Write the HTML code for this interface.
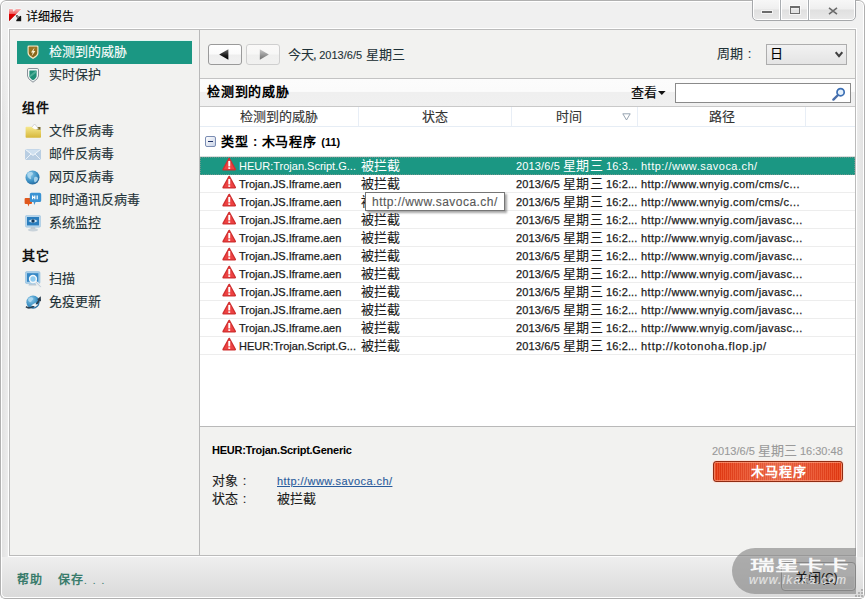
<!DOCTYPE html>
<html lang="zh-CN">
<head>
<meta charset="utf-8">
<title>详细报告</title>
<style>
*{box-sizing:border-box;margin:0;padding:0}
html,body{width:865px;height:599px;overflow:hidden;background:#fff}
body{font-family:"Liberation Sans",sans-serif;font-size:13px;color:#1c1c1c;position:relative;-webkit-text-stroke:.12px currentColor}
.abs,.abs>*{position:absolute}
#win{left:0;top:0;width:865px;height:599px;background:#f0f0f0;border-radius:6px 6px 5px 5px;overflow:hidden}
#wb1{left:0;top:0;width:865px;height:599px;border:1px solid #b0b0b0;border-radius:6px 6px 4px 4px}
#wb2{left:1px;top:1px;width:863px;height:597px;border:1px solid #fff;border-radius:5px}
#botbar{left:1px;top:556px;width:863px;height:41px;background:linear-gradient(#efefef,#dadada)}
#title{left:26px;top:9px;font-size:12px;line-height:16px;color:#000;white-space:nowrap}
#frame{left:8px;top:28px;width:849px;height:529px;border:1px solid #fff}
#frame2{left:9px;top:29px;width:847px;height:527px;border:1px solid #bbbbbb;background:#f2f2f0}
#vdiv{left:199px;top:30px;width:1px;height:525px;background:#b9b9b9}
.t{white-space:nowrap;line-height:16px}
/* sidebar */
#sel{left:17px;top:41px;width:175px;height:23px;background:#1b9783;box-shadow:0 -1px 0 #e3f6f2}
.si{left:49px;font-size:13px;color:#1f3238}
.sh{left:22px;font-size:13px;letter-spacing:.8px;font-weight:bold;color:#111}
/* toolbar */
.nb{top:44px;width:34px;height:21px;border:1px solid #9a9a9a;border-radius:3px;background:linear-gradient(#fff 0,#fbfbfb 48%,#eeeeee 52%,#f1f1f1 100%)}
.nb.dis{border-color:#cfcfcf;background:linear-gradient(#faf9f8 0,#f7f7f6 48%,#efefee 52%,#f1f1f0 100%)}
#hsep1{left:200px;top:78px;width:655px;height:1px;background:#c3c3c3}
#band{left:200px;top:79px;width:655px;height:27px;background:linear-gradient(#fcfcfc 0,#fbfbfb 46%,#efefef 50%,#f0f0f0 100%)}
#hsep2{left:200px;top:106px;width:655px;height:1px;background:#c9c9c9}
#list{left:200px;top:107px;width:655px;height:319px;background:#fff}
#hsep3{left:200px;top:426px;width:655px;height:1px;background:#b9b9b9}
#colhdr{left:200px;top:107px;width:655px;height:20px;border-bottom:1px solid #e6edf5;background:#fff}
.ch{top:2px;font-size:13px;color:#333;text-align:center}
#colhdr>*{position:absolute}
.cs{top:0;width:1px;height:19px;background:#e8eef6}
.row{left:200px;width:655px;height:18px;border-bottom:1px solid #ededed}
.row>*{position:absolute;top:1px;line-height:16px;white-space:nowrap}
.row .n{left:39px;font-size:11px;-webkit-text-stroke-width:.25px}
.row .s{left:161px;font-size:13px}
.row .d{left:316px;font-size:11px;letter-spacing:.15px;-webkit-text-stroke-width:.25px}
.row .d b{font-weight:normal;font-size:13px;-webkit-text-stroke-width:.12px}
.row .p{left:441px;font-size:11px;letter-spacing:.42px;-webkit-text-stroke-width:.25px}
.row.sel{background:#1b9783;color:#fff;-webkit-text-stroke-width:0;border-bottom:none;outline:1px dotted #6b978e;outline-offset:-1px}
.row svg{left:22px;top:0px}

#ctl{left:752px;top:-1px;width:104px;height:22px;border:1px solid #a6a8ab;border-radius:0 0 5px 5px;background:linear-gradient(#f7f7f7 0,#efefef 45%,#e0e0e0 50%,#e9e9e9 100%);box-shadow:inset 0 -1px 0 #fff,inset 1px 0 0 #fff,inset -1px 0 0 #fff}
#ctl>*{position:absolute}
#ctl .dv{top:0;width:1px;height:20px;background:#a9adb1;box-shadow:1px 0 0 #fff,-1px 0 0 #fff}
#tip{left:365px;top:192px;width:140px;height:19px;border:1px solid #767676;background:#fff;box-shadow:2px 2px 2px rgba(0,0,0,.35);font-size:12px;letter-spacing:.46px;line-height:18px;color:#575757;padding-left:6px;white-space:nowrap}
#badge{left:713px;top:461px;width:130px;height:21px;padding-left:2px;border:1px solid #8f2c13;border-radius:3px;background:linear-gradient(90deg,rgba(255,255,255,0),rgba(255,255,255,.22) 50%,rgba(255,255,255,0)),repeating-linear-gradient(90deg,#de350f 0,#de350f 1px,#ea4f27 1px,#ea4f27 2px);box-shadow:inset 0 0 0 1px rgba(255,175,145,.6),0 0 0 1px rgba(253,226,216,.9);color:#fff;font-size:13px;letter-spacing:1px;font-weight:bold;text-align:center;line-height:19px}
#closebtn{left:781px;top:562px;width:75px;height:29px;border:1px solid #8c8c8c;border-radius:4px;background:linear-gradient(#f4f4f4 0,#ececec 48%,#dedede 52%,#d4d4d4 100%);box-shadow:inset 0 0 0 1px rgba(255,255,255,.7)}
#wm{left:732px;top:548px;width:124px;height:46px;border-radius:23px 0 0 23px;background:rgba(130,130,130,.62)}
.c{display:inline-block;width:13px;text-align:center;letter-spacing:0}
.row.sel *{-webkit-text-stroke-width:0!important}
.sh,#badge,[style*="font-weight:bold"],[style*="font-weight:900"]{-webkit-text-stroke-width:0}
</style>
</head>
<body>
<div id="win" class="abs">
  <div id="botbar"></div>
  <div style="left:2px;top:30px;width:6px;height:527px;background:linear-gradient(#f0f0f0,rgba(240,240,240,0) 90px),linear-gradient(90deg,#e2e2e2,#ededed)"></div>
  <div style="left:857px;top:30px;width:6px;height:527px;background:linear-gradient(#f0f0f0,rgba(240,240,240,0) 90px),linear-gradient(90deg,#ebebeb,#e2e2e2)"></div>
  <div id="wb2"></div>
  <div id="wb1"></div>
  <div id="title" class="t">详细报告</div>
  <div id="frame"></div>
  <div id="frame2"></div>
  <div id="vdiv"></div>


  <!-- sidebar -->
  <div id="sel"></div>
  <div class="t si" style="top:44px;color:#fff">检测到的威胁</div>
  <div class="t si" style="top:67px">实时保护</div>
  <div class="t sh" style="top:100px">组件</div>
  <div class="t si" style="top:123px">文件反病毒</div>
  <div class="t si" style="top:146px">邮件反病毒</div>
  <div class="t si" style="top:169px">网页反病毒</div>
  <div class="t si" style="top:192px">即时通讯反病毒</div>
  <div class="t si" style="top:215px">系统监控</div>
  <div class="t sh" style="top:248px">其它</div>
  <div class="t si" style="top:271px">扫描</div>
  <div class="t si" style="top:294px">免疫更新</div>

  <!-- toolbar -->
  <div class="nb" style="left:208px"></div>
  <div class="nb dis" style="left:246px"></div>
  <div class="t" style="left:288px;top:47px;font-size:13px;color:#1f3238">今天<span style="margin-left:-1px;letter-spacing:-.5px">, </span><span style="font-size:11px">2013/6/5</span> 星期三</div>
  <div class="t" style="left:717px;top:46px;font-size:13px;color:#1f3238">周期<span class="c">:</span></div>
  <div id="selbox" style="left:766px;top:44px;width:81px;height:21px;border:1px solid #adadad;background:linear-gradient(#f2f2f2,#e4e4e4)"></div>
  <div class="t" style="left:770px;top:46px;font-size:13px;color:#000">日</div>

  <div id="hsep1"></div>
  <div id="band"></div>
  <div class="t" style="left:207px;top:84px;font-size:13px;letter-spacing:.8px;font-weight:bold;color:#000">检测到的威胁</div>
  <div class="t" style="left:631px;top:85px;font-size:13px;color:#000">查看</div>
  <div id="search" style="left:675px;top:83px;width:176px;height:20px;border:1px solid #8a8a8a;background:#fff"></div>
  <div id="hsep2"></div>

  <div id="list"></div>
  <div id="colhdr">
    <div class="t ch" style="left:0;width:158px">检测到的威胁</div>
    <div class="cs" style="left:158px"></div>
    <div class="t ch" style="left:158px;width:153px">状态</div>
    <div class="cs" style="left:311px"></div>
    <div class="t ch" style="left:312px;width:113px">时间</div>
    <div class="cs" style="left:437px"></div>
    <div class="t ch" style="left:437px;width:169px">路径</div>
    <div class="cs" style="left:605px"></div>
  </div>
  <div class="t" style="left:221px;top:134px;font-size:13px;letter-spacing:.8px;font-weight:bold;color:#000">类型<span class="c">:</span>木马程序 <span style="font-size:11px;letter-spacing:0">(11)</span></div>

  <div style="left:200px;top:156px;width:655px;height:1px;background:#d9dddc"></div>
  <div class="row sel" style="top:157px"><svg width="15" height="14" viewBox="0 0 15 14"><path d="M7.2 1.7 L13.1 12.5 H1.3 Z" fill="#ee4242" stroke="#cf3030" stroke-width="1.9" stroke-linejoin="round"/><path d="M7.2 2.2 L12.6 12.2 H1.8 Z" fill="#ee4242"/><rect x="6.3" y="4" width="1.9" height="5.4" fill="#fff"/><rect x="6.3" y="10.3" width="1.9" height="1.6" fill="#fff"/></svg><span class="n">HEUR:Trojan.Script.G...</span><span class="s">被拦截</span><span class="d">2013/6/5 <b>星期三</b> 16:3...</span><span class="p" style="letter-spacing:.49px">http://www.savoca.ch/</span></div>
  <div class="row" style="top:175px"><svg width="15" height="14" viewBox="0 0 15 14"><path d="M7.2 1.7 L13.1 12.5 H1.3 Z" fill="#ee4242" stroke="#cf3030" stroke-width="1.9" stroke-linejoin="round"/><path d="M7.2 2.2 L12.6 12.2 H1.8 Z" fill="#ee4242"/><rect x="6.3" y="4" width="1.9" height="5.4" fill="#fff"/><rect x="6.3" y="10.3" width="1.9" height="1.6" fill="#fff"/></svg><span class="n">Trojan.JS.Iframe.aen</span><span class="s">被拦截</span><span class="d">2013/6/5 <b>星期三</b> 16:2...</span><span class="p">http://www.wnyig.com/cms/c...</span></div>
  <div class="row" style="top:193px"><svg width="15" height="14" viewBox="0 0 15 14"><path d="M7.2 1.7 L13.1 12.5 H1.3 Z" fill="#ee4242" stroke="#cf3030" stroke-width="1.9" stroke-linejoin="round"/><path d="M7.2 2.2 L12.6 12.2 H1.8 Z" fill="#ee4242"/><rect x="6.3" y="4" width="1.9" height="5.4" fill="#fff"/><rect x="6.3" y="10.3" width="1.9" height="1.6" fill="#fff"/></svg><span class="n">Trojan.JS.Iframe.aen</span><span class="s">被拦截</span><span class="d">2013/6/5 <b>星期三</b> 16:2...</span><span class="p">http://www.wnyig.com/cms/c...</span></div>
  <div class="row" style="top:211px"><svg width="15" height="14" viewBox="0 0 15 14"><path d="M7.2 1.7 L13.1 12.5 H1.3 Z" fill="#ee4242" stroke="#cf3030" stroke-width="1.9" stroke-linejoin="round"/><path d="M7.2 2.2 L12.6 12.2 H1.8 Z" fill="#ee4242"/><rect x="6.3" y="4" width="1.9" height="5.4" fill="#fff"/><rect x="6.3" y="10.3" width="1.9" height="1.6" fill="#fff"/></svg><span class="n">Trojan.JS.Iframe.aen</span><span class="s">被拦截</span><span class="d">2013/6/5 <b>星期三</b> 16:2...</span><span class="p">http://www.wnyig.com/javasc...</span></div>
  <div class="row" style="top:229px"><svg width="15" height="14" viewBox="0 0 15 14"><path d="M7.2 1.7 L13.1 12.5 H1.3 Z" fill="#ee4242" stroke="#cf3030" stroke-width="1.9" stroke-linejoin="round"/><path d="M7.2 2.2 L12.6 12.2 H1.8 Z" fill="#ee4242"/><rect x="6.3" y="4" width="1.9" height="5.4" fill="#fff"/><rect x="6.3" y="10.3" width="1.9" height="1.6" fill="#fff"/></svg><span class="n">Trojan.JS.Iframe.aen</span><span class="s">被拦截</span><span class="d">2013/6/5 <b>星期三</b> 16:2...</span><span class="p">http://www.wnyig.com/javasc...</span></div>
  <div class="row" style="top:247px"><svg width="15" height="14" viewBox="0 0 15 14"><path d="M7.2 1.7 L13.1 12.5 H1.3 Z" fill="#ee4242" stroke="#cf3030" stroke-width="1.9" stroke-linejoin="round"/><path d="M7.2 2.2 L12.6 12.2 H1.8 Z" fill="#ee4242"/><rect x="6.3" y="4" width="1.9" height="5.4" fill="#fff"/><rect x="6.3" y="10.3" width="1.9" height="1.6" fill="#fff"/></svg><span class="n">Trojan.JS.Iframe.aen</span><span class="s">被拦截</span><span class="d">2013/6/5 <b>星期三</b> 16:2...</span><span class="p">http://www.wnyig.com/javasc...</span></div>
  <div class="row" style="top:265px"><svg width="15" height="14" viewBox="0 0 15 14"><path d="M7.2 1.7 L13.1 12.5 H1.3 Z" fill="#ee4242" stroke="#cf3030" stroke-width="1.9" stroke-linejoin="round"/><path d="M7.2 2.2 L12.6 12.2 H1.8 Z" fill="#ee4242"/><rect x="6.3" y="4" width="1.9" height="5.4" fill="#fff"/><rect x="6.3" y="10.3" width="1.9" height="1.6" fill="#fff"/></svg><span class="n">Trojan.JS.Iframe.aen</span><span class="s">被拦截</span><span class="d">2013/6/5 <b>星期三</b> 16:2...</span><span class="p">http://www.wnyig.com/javasc...</span></div>
  <div class="row" style="top:283px"><svg width="15" height="14" viewBox="0 0 15 14"><path d="M7.2 1.7 L13.1 12.5 H1.3 Z" fill="#ee4242" stroke="#cf3030" stroke-width="1.9" stroke-linejoin="round"/><path d="M7.2 2.2 L12.6 12.2 H1.8 Z" fill="#ee4242"/><rect x="6.3" y="4" width="1.9" height="5.4" fill="#fff"/><rect x="6.3" y="10.3" width="1.9" height="1.6" fill="#fff"/></svg><span class="n">Trojan.JS.Iframe.aen</span><span class="s">被拦截</span><span class="d">2013/6/5 <b>星期三</b> 16:2...</span><span class="p">http://www.wnyig.com/javasc...</span></div>
  <div class="row" style="top:301px"><svg width="15" height="14" viewBox="0 0 15 14"><path d="M7.2 1.7 L13.1 12.5 H1.3 Z" fill="#ee4242" stroke="#cf3030" stroke-width="1.9" stroke-linejoin="round"/><path d="M7.2 2.2 L12.6 12.2 H1.8 Z" fill="#ee4242"/><rect x="6.3" y="4" width="1.9" height="5.4" fill="#fff"/><rect x="6.3" y="10.3" width="1.9" height="1.6" fill="#fff"/></svg><span class="n">Trojan.JS.Iframe.aen</span><span class="s">被拦截</span><span class="d">2013/6/5 <b>星期三</b> 16:2...</span><span class="p">http://www.wnyig.com/javasc...</span></div>
  <div class="row" style="top:319px"><svg width="15" height="14" viewBox="0 0 15 14"><path d="M7.2 1.7 L13.1 12.5 H1.3 Z" fill="#ee4242" stroke="#cf3030" stroke-width="1.9" stroke-linejoin="round"/><path d="M7.2 2.2 L12.6 12.2 H1.8 Z" fill="#ee4242"/><rect x="6.3" y="4" width="1.9" height="5.4" fill="#fff"/><rect x="6.3" y="10.3" width="1.9" height="1.6" fill="#fff"/></svg><span class="n">Trojan.JS.Iframe.aen</span><span class="s">被拦截</span><span class="d">2013/6/5 <b>星期三</b> 16:2...</span><span class="p">http://www.wnyig.com/javasc...</span></div>
  <div class="row" style="top:337px"><svg width="15" height="14" viewBox="0 0 15 14"><path d="M7.2 1.7 L13.1 12.5 H1.3 Z" fill="#ee4242" stroke="#cf3030" stroke-width="1.9" stroke-linejoin="round"/><path d="M7.2 2.2 L12.6 12.2 H1.8 Z" fill="#ee4242"/><rect x="6.3" y="4" width="1.9" height="5.4" fill="#fff"/><rect x="6.3" y="10.3" width="1.9" height="1.6" fill="#fff"/></svg><span class="n">HEUR:Trojan.Script.G...</span><span class="s">被拦截</span><span class="d">2013/6/5 <b>星期三</b> 16:2...</span><span class="p" style="letter-spacing:.73px">http://kotonoha.flop.jp/</span></div>

  <div id="hsep3"></div>
  <!-- detail -->
  <div class="t" style="left:212px;top:442px;font-size:11px;letter-spacing:-.25px;font-weight:bold;color:#000">HEUR:Trojan.Script.Generic</div>
  <div class="t" style="left:212px;top:473px;font-size:13px">对象<span class="c">:</span></div>
  <div class="t" style="left:277px;top:473px;font-size:11px;letter-spacing:.43px;color:#2a5c9c;text-decoration:underline">http://www.savoca.ch/</div>
  <div class="t" style="left:212px;top:491px;font-size:13px">状态<span class="c">:</span></div>
  <div class="t" style="left:277px;top:491px;font-size:13px">被拦截</div>


  <!-- title icon -->
  <svg style="left:8px;top:8px" width="15" height="15" viewBox="0 0 15 15">
    <defs><linearGradient id="kg" x1="0" y1="0" x2="0" y2="1"><stop offset="0" stop-color="#f7b3b3"/><stop offset=".38" stop-color="#f06060"/><stop offset=".42" stop-color="#e40000"/><stop offset="1" stop-color="#b40000"/></linearGradient></defs>
    <path d="M1 1 H4.6 L5.4 3.8 L8 1 H13.2 L1 13.2 Z" fill="url(#kg)" stroke="#fff" stroke-width="1" stroke-opacity=".7"/>
    <path d="M1 1 H4.6 L5.4 3.8 L8 1 H13.2 L1 13.2 Z" fill="url(#kg)"/>
    <path d="M7.6 7.4 L9.2 7 L11 9 L12.2 7.8 L13.2 8.2 V13.2 H8.4 L8.2 12 L9.6 10.8 Z" fill="#111" stroke="#fff" stroke-width=".8" stroke-opacity=".8" paint-order="stroke"/>
    <path d="M7.9 7.6 L9.2 7.3 L11 9.4 L9.8 10.6 Z" fill="#8a8a8a"/>
  </svg>

  <!-- window controls -->
  <div id="ctl">
    <div class="dv" style="left:27px"></div>
    <div class="dv" style="left:55px"></div>
    <div style="left:9px;top:11px;width:10px;height:2px;background:#6c6c6c;box-shadow:0 0 0 1px rgba(255,255,255,.6)"></div>
    <div style="left:37px;top:6px;width:10px;height:8px;border:1px solid #6c6c6c;border-top-width:2px;box-shadow:0 0 0 1px rgba(255,255,255,.6)"></div>
    <svg style="left:75px;top:7px" width="10" height="8" viewBox="0 0 10 8"><path d="M1 .8 L9 7.2 M9 .8 L1 7.2" stroke="#6c6c6c" stroke-width="1.6"/></svg>
  </div>

  <!-- sidebar icons -->
  <svg style="left:27px;top:45px" width="12" height="15" viewBox="0 0 12 15">
    <path d="M1.8 .5 H10.2 Q11.5 .5 11.5 1.8 V8 Q11.5 10.8 6 14 Q.5 10.8 .5 8 V1.8 Q.5 .5 1.8 .5Z" fill="#f3e6c0"/>
    <path d="M2.4 1.8 H9.6 Q10.2 1.8 10.2 2.4 V7.9 Q10.2 9.9 6 12.5 Q1.8 9.9 1.8 7.9 V2.4 Q1.8 1.8 2.4 1.8Z" fill="#8a671a"/>
    <path d="M2.4 1.8 H9.6 Q10.2 1.8 10.2 2.4 V5 L1.8 7.6 V2.4 Q1.8 1.8 2.4 1.8Z" fill="#a07a26" opacity=".7"/>
    <path d="M7.6 2.6 L3.9 7.4 H5.8 L4.6 11.2 L8.4 6 H6.4 Z" fill="#fbf3d2"/>
  </svg>
  <svg style="left:27px;top:68px" width="12" height="15" viewBox="0 0 12 15">
    <path d="M1.8 .5 H10.2 Q11.5 .5 11.5 1.8 V8 Q11.5 10.8 6 14.2 Q.5 10.8 .5 8 V1.8 Q.5 .5 1.8 .5Z" fill="#f4f6f6" stroke="#7d878e" stroke-width=".9"/>
    <path d="M2.9 2.4 H9.1 Q9.6 2.4 9.6 2.9 V7.9 Q9.6 9.8 6 12.2 Q2.4 9.8 2.4 7.9 V2.9 Q2.4 2.4 2.9 2.4Z" fill="#1f8f77"/>
    <path d="M2.4 7.4 L8.8 2.5 L9.6 2.9 V4.6 L2.8 9.4 Z" fill="#58b49d" opacity=".85"/>
  </svg>
  <!-- folder -->
  <svg style="left:25px;top:123px" width="17" height="16" viewBox="0 0 17 16">
    <defs><linearGradient id="fg" x1="0" y1="0" x2="0" y2="1"><stop offset="0" stop-color="#f6e88c"/><stop offset="1" stop-color="#d6b73a"/></linearGradient></defs>
    <path d="M9.5 4 H15.5 V8 H9.5Z" fill="#77682c"/>
    <path d="M6.5 4.5 L9.6 1 L13.4 5.4 L9 8 Z" fill="#fdfdfd" stroke="#b9b9b9" stroke-width=".6"/>
    <path d="M.6 4.6 Q.6 3.8 1.4 3.8 H6.6 L8 5.2 L10 6.2 L15.6 6.8 Q16 6.8 16 7.4 V14 Q16 14.8 15.2 14.8 H1.4 Q.6 14.8 .6 14 Z" fill="url(#fg)"/>
  </svg>
  <!-- mail -->
  <svg style="left:25px;top:149px" width="16" height="11" viewBox="0 0 16 11">
    <rect x="0" y="0" width="16" height="11" rx=".8" fill="#b9cee2"/>
    <path d="M.4 .4 L8 6.4 L15.6 .4" fill="#cfe0ef" stroke="#f4f8fb" stroke-width="1"/>
    <path d="M.4 10.6 L6 5 M15.6 10.6 L10 5" stroke="#eaf1f7" stroke-width="1" fill="none"/>
  </svg>
  <!-- globe -->
  <svg style="left:25px;top:170px" width="15" height="15" viewBox="0 0 15 15">
    <defs><radialGradient id="gg" cx=".35" cy=".3" r=".8"><stop offset="0" stop-color="#8ccaea"/><stop offset=".6" stop-color="#3b8fc2"/><stop offset="1" stop-color="#1f5f94"/></radialGradient></defs>
    <circle cx="7.5" cy="7.5" r="7" fill="url(#gg)"/>
    <path d="M3 2.6 C5 1.6 7.6 2 8 3.4 C8.2 4.6 6.4 5 5.8 6.2 C5.4 7.2 6.6 8 6 9 C5 9.6 3.6 8.4 2.6 6.6 C2 5 2.2 3.4 3 2.6Z M9.6 7 C11 6.4 12.8 7 13 8.4 C12.8 10.4 11.4 12 9.8 12.4 C8.8 11.4 8.6 8.2 9.6 7Z" fill="#b5dcf1" opacity=".85"/>
  </svg>
  <!-- chat -->
  <svg style="left:24px;top:192px" width="18" height="15" viewBox="0 0 18 15">
    <path d="M1.6 6 H7 Q8 6 8 7 V11 Q8 12 7 12 H5.4 L4.4 14.4 L3.6 12 H1.6 Q.6 12 .6 11 V7 Q.6 6 1.6 6Z" fill="#e0581c"/>
    <path d="M7.4 .8 H15.6 Q17.2 .8 17.2 2.4 V8.4 Q17.2 10 15.6 10 H11.6 L10.2 13 L9.6 10 H7.4 Q5.8 10 5.8 8.4 V2.4 Q5.8 .8 7.4 .8Z" fill="#3b93d3"/>
    <path d="M8.6 3.6 V7.2 M10.8 3.6 V7.2 M8.6 5.4 H10.8 M13.2 3.6 V7.2" stroke="#fff" stroke-width="1.2" fill="none"/>
  </svg>
  <!-- monitor eye -->
  <svg style="left:25px;top:215px" width="16" height="17" viewBox="0 0 16 17">
    <rect x=".4" y=".4" width="15.2" height="11.8" rx="1.4" fill="#b7d6ec" stroke="#9cc3df" stroke-width=".6"/>
    <rect x="2" y="2" width="12" height="8.4" fill="#2a7dbd"/>
    <path d="M3.4 6 Q8 2.4 12.6 6 Q8 9.4 3.4 6Z" fill="#d8ecf8"/>
    <circle cx="8" cy="6" r="1.7" fill="#143a5e"/>
    <path d="M6 12.2 H10 L10.6 14.4 H5.4Z" fill="#b9c4cc"/>
    <ellipse cx="8" cy="15" rx="5" ry="1.4" fill="#c9d3da"/>
  </svg>
  <!-- scan -->
  <svg style="left:25px;top:271px" width="17" height="18" viewBox="0 0 17 18">
    <rect x=".4" y=".6" width="14.6" height="12" rx="1.4" fill="#a9cfe9" stroke="#8dbcdc" stroke-width=".6"/>
    <rect x="2" y="2.2" width="11.4" height="8.6" fill="#3587c5"/>
    <path d="M4 13 H11 L11.6 14.6 H3.4Z" fill="#b9c9d6"/>
    <path d="M10.2 10.4 L15.4 15.6" stroke="#e9eef2" stroke-width="2.4" stroke-linecap="round"/>
    <path d="M10.2 10.4 L15.4 15.6" stroke="#b7c0c8" stroke-width=".8" stroke-linecap="round"/>
    <circle cx="8" cy="8" r="3.4" fill="#8fcbef" stroke="#f4f7f9" stroke-width="1.5"/>
  </svg>
  <!-- update -->
  <svg style="left:25px;top:294px" width="17" height="16" viewBox="0 0 17 16">
    <circle cx="8" cy="8.2" r="6.6" fill="url(#gg)"/>
    <path d="M3.6 4 C5.6 2.6 8.2 3.2 8.4 4.8 C8.4 6.2 6.2 6.4 6.2 8 C5 8.6 3.4 7.4 3 6 Z" fill="#b5dcf1" opacity=".8"/>
    <path d="M1 12.6 C4 15.6 11 12.6 14.6 5.6" stroke="#2c3e4e" stroke-width="1.6" fill="none"/>
    <path d="M12.2 5.2 L15.8 2.2 L16 7.4Z" fill="#2c3e4e"/>
    <path d="M6 11.4 L11 8.6 L10.6 10.2 L13.4 10.4 L9.4 13.6 L9.6 12.2Z" fill="#f4f7f9"/>
  </svg>

  <!-- nav arrows -->
  <svg style="left:219px;top:49px" width="10" height="11" viewBox="0 0 10 11"><defs><linearGradient id="a1" x1="0" y1="0" x2="0" y2="1"><stop offset="0" stop-color="#6a6a6a"/><stop offset=".6" stop-color="#1a1a1a"/><stop offset="1" stop-color="#000"/></linearGradient><linearGradient id="a2" x1="0" y1="0" x2="0" y2="1"><stop offset="0" stop-color="#c8c8c8"/><stop offset="1" stop-color="#6e6e6e"/></linearGradient></defs><path d="M9.4 .3 V10.7 L.2 5.5Z" fill="url(#a1)"/></svg>
  <svg style="left:259px;top:49px" width="10" height="11" viewBox="0 0 10 11"><path d="M.8 .3 V10.7 L9.8 5.5Z" fill="url(#a2)"/></svg>
  <!-- select chevron -->
  <svg style="left:835px;top:51px" width="8" height="7" viewBox="0 0 8 7"><path d="M.7 1.2 L4 5.2 L7.3 1.2" stroke="#404040" stroke-width="2" fill="none"/></svg>
  <!-- view dropdown arrow -->
  <svg style="left:658px;top:91px" width="8" height="4" viewBox="0 0 8 4"><path d="M0 0 H7.6 L3.8 4Z" fill="#111"/></svg>
  <!-- search icon -->
  <svg style="left:832px;top:87px" width="14" height="14" viewBox="0 0 14 14">
    <path d="M6 8 L1.4 12.6" stroke="#4a6ea8" stroke-width="2.4" stroke-linecap="round"/>
    <circle cx="8.6" cy="5.2" r="3.6" fill="#e4f0fb" stroke="#3c6fb4" stroke-width="1.7"/>
  </svg>
  <!-- sort arrow -->
  <svg style="left:622px;top:113px" width="9" height="8" viewBox="0 0 9 8"><path d="M.8 .8 H8.2 L4.5 7Z" fill="#fff" stroke="#8c9aa8" stroke-width=".9"/></svg>
  <!-- group toggle -->
  <div style="left:205px;top:136px;width:11px;height:11px;border:1px solid #7b8db3;border-radius:2px;background:linear-gradient(135deg,#fff,#c9d3e6)"></div>
  <div style="left:208px;top:141px;width:5px;height:1px;background:#1c2f66"></div>

  <div id="tip">http://www.savoca.ch/</div>
  <div class="t" style="left:712px;top:443px;font-size:11px;color:#9a9a9a">2013/6/5 <span style="font-size:13px">星期三</span> 16:30:48</div>
  <div id="badge">木马程序</div>
  <div id="closebtn"></div>
  <div id="wm"></div>
  <div class="t" style="left:795px;top:570px;font-size:13px;color:#1a1a1a">关闭<span style="font-size:12px">(<u>C</u>)</span></div>
  <div class="t" style="left:750px;top:556px;font-size:14px;line-height:18px;font-weight:900;color:#fff;opacity:.92;transform:scaleX(1.75);transform-origin:0 0">瑞星卡卡</div>
  <div class="t" style="left:749px;top:572px;font-size:12px;font-style:italic;color:#f4f4f4;opacity:.8;letter-spacing:1.2px">www.ikaka.com</div>
  <!-- resize grip -->
  <svg style="left:855px;top:589px" width="9" height="9" viewBox="0 0 9 9"><g fill="#b0b0b0"><rect x="6" y="0" width="2" height="2"/><rect x="3" y="3" width="2" height="2"/><rect x="6" y="3" width="2" height="2"/><rect x="0" y="6" width="2" height="2"/><rect x="3" y="6" width="2" height="2"/><rect x="6" y="6" width="2" height="2"/></g></svg>
  <div class="t" style="left:17px;top:572px;font-family:'Liberation Serif',serif;font-size:12px;letter-spacing:1px;font-weight:bold;color:#3a7c6c">帮助</div>
  <div class="t" style="left:58px;top:572px;font-family:'Liberation Serif',serif;font-size:12px;letter-spacing:1px;font-weight:bold;color:#3a7c6c">保存<span style="font-weight:normal;font-size:11px;letter-spacing:1.6px">. . .</span></div>
</div>
</body>
</html>
